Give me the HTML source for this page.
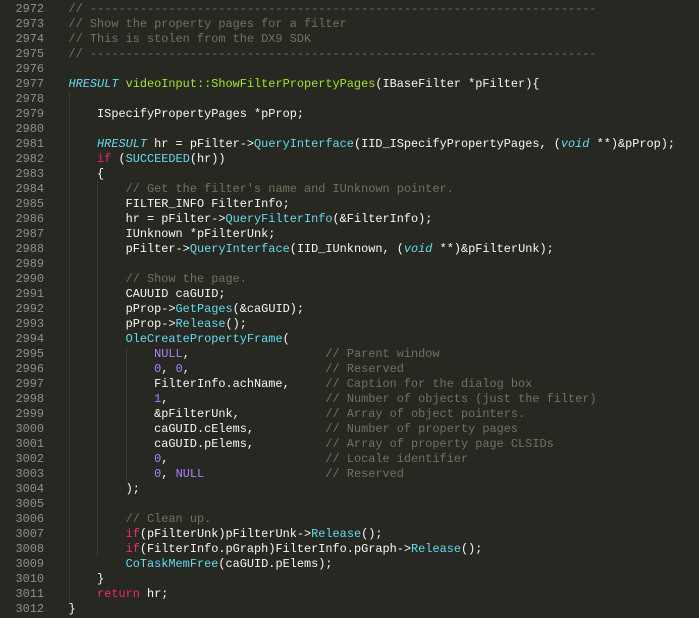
<!DOCTYPE html>
<html><head><meta charset="utf-8"><style>
html,body{margin:0;padding:0;background:#272822;width:699px;height:618px;overflow:hidden}
.g{position:absolute;left:0;top:2px;width:44px;text-align:right;color:#8f908a;font:11.9px/15px "Liberation Mono",monospace;white-space:pre}
.c{position:absolute;left:68.5px;top:2px;color:#f8f8f2;font:11.9px/15px "Liberation Mono",monospace;white-space:pre;margin:0}
.m{color:#75715e}.k{color:#f92672}.t{color:#66d9ef;font-style:italic}.f{color:#66d9ef}.n{color:#a6e22e}.p{color:#ae81ff}
.v{position:absolute;width:0;border-left:1px dotted #4a4b44}
</style></head><body>
<div class="v" style="left:69px;top:92px;height:510px"></div>
<div class="v" style="left:97px;top:182px;height:375px"></div>
<div class="v" style="left:126px;top:347px;height:135px"></div>
<div class="g">2972
2973
2974
2975
2976
2977
2978
2979
2980
2981
2982
2983
2984
2985
2986
2987
2988
2989
2990
2991
2992
2993
2994
2995
2996
2997
2998
2999
3000
3001
3002
3003
3004
3005
3006
3007
3008
3009
3010
3011
3012</div>
<pre class="c"><span class="m">// -----------------------------------------------------------------------</span>
<span class="m">// Show the property pages for a filter</span>
<span class="m">// This is stolen from the DX9 SDK</span>
<span class="m">// -----------------------------------------------------------------------</span>

<span class="t">HRESULT</span> <span class="n">videoInput::ShowFilterPropertyPages</span>(IBaseFilter *pFilter){

    ISpecifyPropertyPages *pProp;

    <span class="t">HRESULT</span> hr = pFilter-&gt;<span class="f">QueryInterface</span>(IID_ISpecifyPropertyPages, (<span class="t">void</span> **)&amp;pProp);
    <span class="k">if</span> (<span class="f">SUCCEEDED</span>(hr))
    {
        <span class="m">// Get the filter's name and IUnknown pointer.</span>
        FILTER_INFO FilterInfo;
        hr = pFilter-&gt;<span class="f">QueryFilterInfo</span>(&amp;FilterInfo);
        IUnknown *pFilterUnk;
        pFilter-&gt;<span class="f">QueryInterface</span>(IID_IUnknown, (<span class="t">void</span> **)&amp;pFilterUnk);

        <span class="m">// Show the page.</span>
        CAUUID caGUID;
        pProp-&gt;<span class="f">GetPages</span>(&amp;caGUID);
        pProp-&gt;<span class="f">Release</span>();
        <span class="f">OleCreatePropertyFrame</span>(
            <span class="p">NULL</span>,                   <span class="m">// Parent window</span>
            <span class="p">0</span>, <span class="p">0</span>,                   <span class="m">// Reserved</span>
            FilterInfo.achName,     <span class="m">// Caption for the dialog box</span>
            <span class="p">1</span>,                      <span class="m">// Number of objects (just the filter)</span>
            &amp;pFilterUnk,            <span class="m">// Array of object pointers.</span>
            caGUID.cElems,          <span class="m">// Number of property pages</span>
            caGUID.pElems,          <span class="m">// Array of property page CLSIDs</span>
            <span class="p">0</span>,                      <span class="m">// Locale identifier</span>
            <span class="p">0</span>, <span class="p">NULL</span>                 <span class="m">// Reserved</span>
        );

        <span class="m">// Clean up.</span>
        <span class="k">if</span>(pFilterUnk)pFilterUnk-&gt;<span class="f">Release</span>();
        <span class="k">if</span>(FilterInfo.pGraph)FilterInfo.pGraph-&gt;<span class="f">Release</span>();
        <span class="f">CoTaskMemFree</span>(caGUID.pElems);
    }
    <span class="k">return</span> hr;
}</pre>
</body></html>
